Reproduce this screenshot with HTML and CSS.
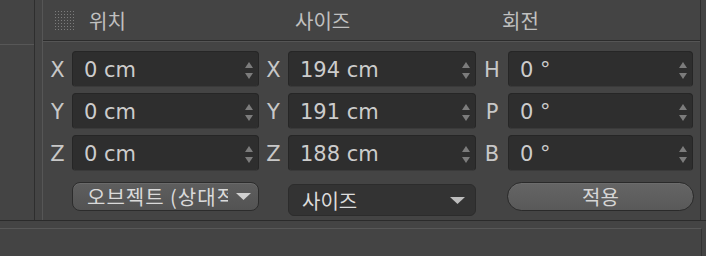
FILE: index.html
```html
<html>
	<head>
		<meta charset="utf-8">
		<link rel="stylesheet" href="styles.css">
	</head>
	<body>
		<div class="top">
			<div class="side"><div class="side-head"></div></div>
			<div class="main">
				<div class="head">
					<div class="hcell h1">
						<svg class="grip" width="22" height="21" viewBox="0 0 22 21">
							<defs>
								<pattern id="dots" width="3" height="3" patternUnits="userSpaceOnUse">
									<rect x="1" y="1" width="1" height="1" fill="#7c7c7c"/>
								</pattern>
							</defs>
							<rect width="22" height="21" fill="url(#dots)"/>
						</svg>
						<span>위치</span>
					</div>
					<div class="hcell h2">사이즈</div>
					<div class="hcell h3">회전</div>
				</div>
				<div class="grid">
					<span class="lbl">X</span>
					<div class="field"><span>0 cm</span><svg class="spin" width="8" height="17"><polygon points="0,6 4,0 8,6"/><polygon points="0,11 8,11 4,17"/></svg></div>
					<span class="lbl">X</span>
					<div class="field"><span>194 cm</span><svg class="spin" width="8" height="17"><polygon points="0,6 4,0 8,6"/><polygon points="0,11 8,11 4,17"/></svg></div>
					<span class="lbl">H</span>
					<div class="field"><span>0 °</span><svg class="spin" width="8" height="17"><polygon points="0,6 4,0 8,6"/><polygon points="0,11 8,11 4,17"/></svg></div>

					<span class="lbl">Y</span>
					<div class="field"><span>0 cm</span><svg class="spin" width="8" height="17"><polygon points="0,6 4,0 8,6"/><polygon points="0,11 8,11 4,17"/></svg></div>
					<span class="lbl">Y</span>
					<div class="field"><span>191 cm</span><svg class="spin" width="8" height="17"><polygon points="0,6 4,0 8,6"/><polygon points="0,11 8,11 4,17"/></svg></div>
					<span class="lbl">P</span>
					<div class="field"><span>0 °</span><svg class="spin" width="8" height="17"><polygon points="0,6 4,0 8,6"/><polygon points="0,11 8,11 4,17"/></svg></div>

					<span class="lbl">Z</span>
					<div class="field"><span>0 cm</span><svg class="spin" width="8" height="17"><polygon points="0,6 4,0 8,6"/><polygon points="0,11 8,11 4,17"/></svg></div>
					<span class="lbl">Z</span>
					<div class="field"><span>188 cm</span><svg class="spin" width="8" height="17"><polygon points="0,6 4,0 8,6"/><polygon points="0,11 8,11 4,17"/></svg></div>
					<span class="lbl">B</span>
					<div class="field"><span>0 °</span><svg class="spin" width="8" height="17"><polygon points="0,6 4,0 8,6"/><polygon points="0,11 8,11 4,17"/></svg></div>

					<span></span>
					<div class="btn drop-light"><span class="btext">오브젝트 (상대적)</span><svg class="tri" width="15" height="7"><polygon points="0,0 15,0 7.5,7"/></svg></div>
					<span></span>
					<div class="btn drop-dark"><span class="btext">사이즈</span><svg class="tri" width="15" height="7"><polygon points="0,0 15,0 7.5,7"/></svg></div>
					<span></span>
					<div class="btn apply">적용</div>
				</div>
			</div>
		</div>
		<div class="bottom"></div>
	</body>
</html>
```

FILE: styles.css
```css
body {
	margin: 0;
	background-color: #444444;
	font-family: "DejaVu Sans", "Noto Sans CJK KR", sans-serif;
	color: #c4c4c4;
	overflow: hidden;
}
.top {
	display: flex;
	height: 221px;
	box-sizing: border-box;
	border-bottom: 1px solid #2b2b2b;
}
.side {
	width: 34px;
	border-right: 1px solid #2e2e2e;
}
.side-head {
	height: 44px;
	border-bottom: 1px solid #575757;
}
.main {
	width: 659px;
	margin-left: 7px;
	box-sizing: border-box;
	border-left: 1px solid #565656;
	border-right: 1px solid #2e2e2e;
}
.head {
	display: grid;
	grid-template-columns: 216px 217px 217px;
	height: 40px;
	border-bottom: 1px solid #2c2c2c;
	box-shadow: 0 1px 0 #555555;
	font-family: "Noto Sans CJK KR", sans-serif;
	font-size: 20px;
	color: #c0c0c0;
}
.hcell {
	display: flex;
	align-items: center;
	padding-top: 1px;
}
.h1 {
	padding-left: 11px;
}
.grip {
	margin-right: 13px;
}
.h2 {
	padding-left: 36px;
}
.h3 {
	padding-left: 26px;
}
.grid {
	display: grid;
	grid-template-columns: 29px 187px 29px 188px 32px 185px;
	grid-template-rows: 36px 36px 36px 34px;
	row-gap: 6px;
	padding-top: 10px;
}
.lbl {
	font-size: 21px;
	display: flex;
	align-items: center;
	justify-content: center;
	padding-top: 2px;
	color: #c8c8c8;
}
.field {
	display: flex;
	align-items: center;
	justify-content: space-between;
	background-color: #2e2e2e;
	border: 1px solid #262626;
	border-bottom-color: #3a3a3a;
	border-radius: 4px;
	padding: 2px 5px 0 11px;
	font-size: 21px;
	color: #cccccc;
}
.spin {
	fill: #7c7c7c;
}
.btn {
	margin-top: 5px;
	display: flex;
	align-items: center;
	font-family: "Noto Sans CJK KR", sans-serif;
	font-size: 20px;
	box-sizing: border-box;
}
.btext {
	flex: 1;
	overflow: hidden;
	white-space: nowrap;
}
.drop-light {
	background: linear-gradient(#5e5e5e, #535353);
	border: 1px solid #2c2c2c;
	border-radius: 8px;
	padding: 0 7px 0 14px;
	color: #dadada;
	box-shadow: inset 0 1px 0 #6a6a6a;
}
.drop-light .btext {
	letter-spacing: 1px;
}
.drop-light .tri {
	fill: #d0d0d0;
	margin-left: 8px;
}
.drop-dark {
	margin-top: 7px;
	height: 32px;
	background-color: #333333;
	border: 1px solid #2c2c2c;
	border-radius: 6px;
	padding: 0 10px 0 13px;
	color: #dcdcdc;
}
.drop-dark .tri {
	fill: #bdbdbd;
}
.apply {
	justify-content: center;
	background: linear-gradient(#656565, #595959);
	border: 1px solid #2a2a2a;
	border-radius: 17px;
	color: #d6d6d6;
	margin-right: -1px;
	margin-left: -1px;
	box-shadow: inset 0 1px 0 #6c6c6c;
}
.bottom {
	margin-top: 7px;
	height: 28px;
	width: 702px;
	box-sizing: border-box;
	border-top: 1px solid #585858;
	border-right: 1px solid #333333;
}
```
